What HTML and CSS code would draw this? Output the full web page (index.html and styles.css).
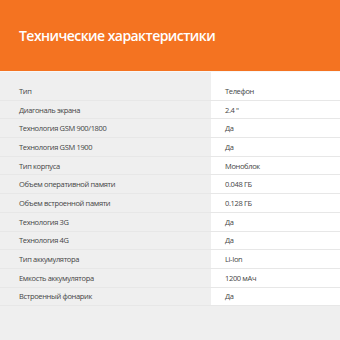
FILE: index.html
```html
<!DOCTYPE html>
<html lang="ru">
<head>
<meta charset="utf-8">
<link rel="stylesheet" href="styles.css">
</head>
<body>
<header class="head"><h1 class="title">Технические характеристики</h1></header>
<section class="specs">
  <div class="row"><span class="label">Тип</span><span class="value">Телефон</span></div>
  <div class="row"><span class="label">Диагональ экрана</span><span class="value">2.4 "</span></div>
  <div class="row"><span class="label">Технология GSM 900/1800</span><span class="value">Да</span></div>
  <div class="row"><span class="label">Технология GSM 1900</span><span class="value">Да</span></div>
  <div class="row"><span class="label">Тип корпуса</span><span class="value">Моноблок</span></div>
  <div class="row"><span class="label">Объем оперативной памяти</span><span class="value">0.048 ГБ</span></div>
  <div class="row"><span class="label">Объем встроенной памяти</span><span class="value">0.128 ГБ</span></div>
  <div class="row"><span class="label">Технология 3G</span><span class="value">Да</span></div>
  <div class="row"><span class="label">Технология 4G</span><span class="value">Да</span></div>
  <div class="row"><span class="label">Тип аккумулятора</span><span class="value">Li-Ion</span></div>
  <div class="row"><span class="label">Емкость аккумулятора</span><span class="value">1200 мАч</span></div>
  <div class="row"><span class="label">Встроенный фонарик</span><span class="value">Да</span></div>
</section>
</body>
</html>
```
FILE: styles.css
```css
html, body {
  margin: 0;
  padding: 0;
  background: #efefef;
  font-family: "Open Sans", "DejaVu Sans", sans-serif;
}
.head {
  height: 71px;
  background: #f47321;
  display: flex;
  align-items: center;
  padding-left: 19px;
}
.title {
  margin: 0;
  color: #fff;
  font-size: 14px;
  font-weight: 600;
  letter-spacing: -0.55px;
}
.specs {
  border-top: 1px solid #f7f7f7;
  padding-top: 10px;
  background: linear-gradient(90deg, #efefef 211px, #ffffff 211px);
}
.row {
  display: grid;
  grid-template-columns: 211px 1fr;
  align-items: center;
  height: 18.7px;
  box-sizing: border-box;
  border-bottom: 1px solid #e7e7e7;
  font-size: 7.5px;
  letter-spacing: -0.35px;
  color: #454545;
}
.label {
  padding-left: 19px;
}
.value {
  padding-left: 14px;
}
```
